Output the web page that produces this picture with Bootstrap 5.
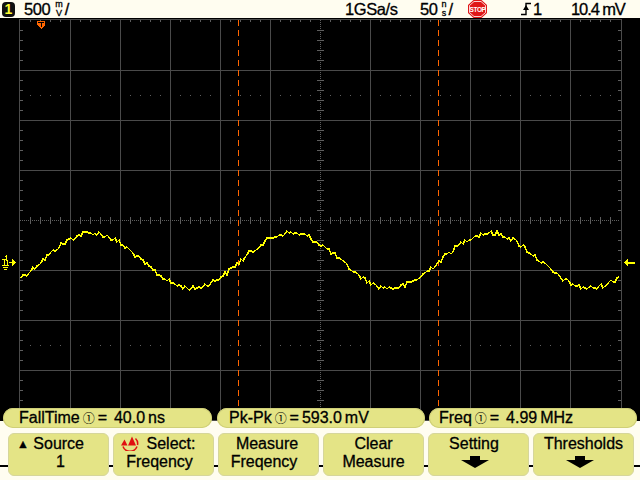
<!DOCTYPE html>
<html lang="en">
<head>
  <meta charset="UTF-8">
  <title>Oscilloscope</title>
  <link rel="stylesheet" href="https://cdn.jsdelivr.net/npm/bootstrap@5.3.0/dist/css/bootstrap.min.css">
  <script src="https://cdn.jsdelivr.net/npm/bootstrap@5.3.0/dist/js/bootstrap.bundle.min.js"></script>
  <style>
    html, body { width: 640px; height: 480px; overflow: hidden; background: #fffdf0; }
    body { font-family: "Liberation Sans", Arial, sans-serif; color: #000; -webkit-text-stroke: 0.3px #000; }
    .top-bar { height: 18px; font-size: 16.5px; line-height: 18px; background: #fffdf0; white-space: nowrap; letter-spacing: -0.4px; }
    .ch-badge { width: 13px; height: 15px; margin-left: 2px; margin-top: 2px; background: #111; color: #ffff33; border-radius: 4px; font-size: 14px; line-height: 15px; text-align: center; font-weight: bold; -webkit-text-stroke: 0; letter-spacing: 0; }
    .unit-frac { display: inline-flex; flex-direction: column; font-size: 9px; line-height: 9px; text-align: center; margin-left: 5px; letter-spacing: 0; }
    .slash { margin-left: 2px; }
    .t-volts { margin-left: 9px; }
    .t-rate { margin-left: 276px; width: 75px; }
    .t-time { width: 48px; }
    .t-stop { width: 53px; }
    .t-trig { width: 50px; }
    .t-value { letter-spacing: -1.1px; }
    .stop-svg { display: block; }
    .scope-svg { display: block; background: #000; }
    .foot-area { height: 59px; border-bottom: 2px solid #000; }
    .pill-row { height: 20px; margin-top: -13px; margin-left: 3px; gap: 4px; position: relative; }
    .meas-pill { width: 208px; background: #e4e486; border-radius: 10px; font-size: 16px; line-height: 20px; padding-left: 12px; white-space: nowrap; word-spacing: -1.5px; box-shadow: inset 0 0 0 1px #cfcf78; }
    .meas-pill.first { width: 209px; margin-right: 1px; padding-left: 16px; }
    .meas-pill.third { padding-left: 10px; }
    .val-gap { margin-left: 4px; }
    .circ { font-family: "Noto Sans CJK SC", "DejaVu Sans", sans-serif; font-size: 12px; -webkit-text-stroke: 0; }
    .key-row { margin-top: 5px; margin-left: 8px; gap: 4px; }
    .soft-key { width: 101px; height: 43px; padding: 1px 0 0; background: #e4e486; border: 1px solid #d6d69a; border-radius: 6px; font-size: 16px; line-height: 18px; text-align: center; color: #000; white-space: nowrap; }
    .soft-key:hover { background: #e4e486; color: #000; border-color: #d6d69a; }
    .down-arrow { display: block; margin: 3px auto 0; }
    .tri-up { font-size: 12px; vertical-align: 1px; margin-left: -8px; }
    .sel-icon { vertical-align: -2px; margin-right: 7px; margin-left: -12px; }
    .nudge-8 { display: inline-block; margin-right: 8px; }
    .nudge-3 { display: inline-block; margin-right: 3px; }
    .nudge-9 { display: inline-block; margin-right: 9px; }
    .nudge-right { display: inline-block; margin-left: 4px; }
    .arrow-left { position: relative; left: -4px; }
  </style>
</head>
<body>
  <div class="top-bar d-flex align-items-start">
    <div class="ch-badge">1</div>
    <div class="t-volts d-flex"><span>500</span><span class="unit-frac"><span>m</span><span>V</span></span><span class="slash">/</span></div>
    <div class="t-rate">1GSa/s</div>
    <div class="t-time d-flex"><span>50</span><span class="unit-frac ms-1"><span>n</span><span>s</span></span><span class="slash">/</span></div>
    <div class="t-stop">
      <svg class="stop-svg" width="19" height="18" viewBox="0 0 19 18">
        <polygon points="5.5,0 13.5,0 19,5 19,13 13.5,18 5.5,18 0,13 0,5" fill="#e01818"/>
        <polygon points="6,1.5 13,1.5 17.5,5.5 17.5,12.5 13,16.5 6,16.5 1.5,12.5 1.5,5.5" fill="none" stroke="#fff" stroke-width="0.8"/>
        <text x="9.5" y="11.5" text-anchor="middle" font-size="6.5" font-weight="bold" fill="#fff" stroke="none" font-family="Liberation Sans" style="-webkit-text-stroke:0">STOP</text>
      </svg>
    </div>
    <div class="t-trig d-flex align-items-center">
      <svg width="12" height="18" viewBox="0 0 12 18"><path d="M0 14.5H5V3.5H10" fill="none" stroke="#000" stroke-width="1.4"/><polygon points="2,10 8,10 5,5" fill="#000"/></svg>
      <span>1</span>
    </div>
    <div class="t-value">10.4 mV</div>
  </div>

  <svg id="screen" class="scope-svg" width="640" height="403" viewBox="0 18 640 403" shape-rendering="crispEdges"></svg>

  <div class="foot-area">
    <div class="pill-row d-flex">
      <div class="meas-pill first">FallTime <span class="circ">①</span> = <span class="val-gap">40.0 ns</span></div>
      <div class="meas-pill">Pk-Pk <span class="circ">①</span> = 593.0 mV</div>
      <div class="meas-pill third">Freq <span class="circ">①</span> = <span class="val-gap">4.99 MHz</span></div>
    </div>
    <div class="key-row d-flex">
      <div class="btn soft-key"><span class="nudge-8"><span class="tri-up">▲</span> Source</span><br><span class="nudge-right">1</span></div>
      <div class="btn soft-key">
        <svg class="sel-icon" width="20" height="15" viewBox="0 0 20 15">
          <path d="M3 10.5A7.5 7.5 0 0 0 17 10.5M15.5 2.5A7 7 0 0 1 17.5 9" fill="none" stroke="#e01010" stroke-width="1.5" shape-rendering="auto"/>
          <polygon points="4.5,3.5 7.5,9.5 1,9.5" fill="#e01010"/>
          <polygon points="12,0.5 16,9.5 8,9.5" fill="#e01010"/>
        </svg>Select:<br><span class="nudge-8">Freqency</span>
      </div>
      <div class="btn soft-key"><span class="nudge-3">Measure</span><br><span class="nudge-9">Freqency</span></div>
      <div class="btn soft-key">Clear<br>Measure</div>
      <div class="btn soft-key"><span class="nudge-9">Setting</span>
        <svg class="down-arrow arrow-left" width="30" height="12" viewBox="0 0 30 12"><polygon points="10,0 20,0 20,4 29,4 15,12 1,4 10,4"/></svg>
      </div>
      <div class="btn soft-key">Thresholds
        <svg class="down-arrow arrow-left" width="30" height="12" viewBox="0 0 30 12"><polygon points="10,0 20,0 20,4 29,4 15,12 1,4 10,4"/></svg>
      </div>
    </div>
  </div>

  <script>
    document.addEventListener('DOMContentLoaded', function() {
      const gridColor = '#4a4a4a';
      const dotColor = '#5e5e5e';
      let grid = '';
      let dots = '';

      // solid divisions
      for (let x = 70; x <= 570; x += 50) {
        if (x !== 320) grid += `M${x + 0.5} 19V421`;
      }
      for (let y = 70; y <= 370; y += 50) {
        if (y !== 220) grid += `M19 ${y + 0.5}H622`;
      }
      grid += 'M19.5 19V421M621.5 19V421M19 19.5H622M19 420.5H622';

      // ticks along the border, every 10px
      for (let x = 30; x < 620; x += 10) {
        if ((x - 20) % 50 === 0) continue;
        dots += `M${x} 20h1v2h-1z M${x} 418h1v2h-1z`;
        dots += `M${x} 95h1v1h-1z M${x} 345h1v1h-1z`;
        dots += `M${x} 217h1v7h-1z`;
      }
      for (let y = 30; y < 420; y += 10) {
        if ((y - 20) % 50 === 0) continue;
        dots += `M20 ${y}h3v1h-3z M618 ${y}h3v1h-3z`;
        dots += `M317 ${y}h7v1h-7z`;
      }
      // dotted centre lines
      for (let x = 20; x < 620; x += 2) dots += `M${x} 220h1v1h-1z`;
      for (let y = 20; y < 420; y += 2) dots += `M320 ${y}h1v1h-1z`;

      // yellow trace, seeded so that the noise is the same on each load
      let seed = 12345;
      function rnd() {
        seed = (seed * 1103515245 + 12345) & 0x7fffffff;
        return seed / 0x7fffffff;
      }
      let pts = [];
      for (let x = 21; x <= 620; x += 2) {
        const base = 260.5 - 27.5 * Math.cos(2 * Math.PI * (x - 92) / 199);
        const y = Math.round(base + (rnd() - 0.5) * 5);
        pts.push(x + ',' + y);
      }

      document.getElementById('screen').innerHTML = `
        <path d="${grid}" stroke="${gridColor}" stroke-width="1" fill="none"/>
        <path d="${dots}" fill="${dotColor}"/>
        <path d="M238.5 20V420M438.5 20V420" stroke="#ff6600" stroke-width="1" stroke-dasharray="6 4"/>
        <polyline points="${pts.join(' ')}" fill="none" stroke="#ffff00" stroke-width="1.4"/>
        <g id="trig-mark">
          <polygon points="37,21 45,21 45,25 41,29 37,25" fill="#ff6600"/>
          <path d="M38 22.5H44M41 22.5V27" stroke="#000" stroke-width="1"/>
        </g>
        <g id="ground-mark" fill="#ffff00" stroke="none">
          <path d="M6 255h1v6h-1z M5 256h1v1h-1z"/>
          <path d="M2 259h5v1h-5z M4 259h1v6h-1z M7 260h1v5h-1z M2 265h7v1h-7z M3 267h5v1h-5z M4 269h3v1h-3z"/>
          <polygon points="9,262 12,262 12,258 16,262.5 12,267 12,263 9,263"/>
        </g>
        <g id="right-mark" fill="#ffff00" stroke="none">
          <polygon points="624,262.5 628,258.5 628,261.5 635,261.5 635,263.5 628,263.5 628,266.5"/>
        </g>`;
    });
  </script>
</body>
</html>
